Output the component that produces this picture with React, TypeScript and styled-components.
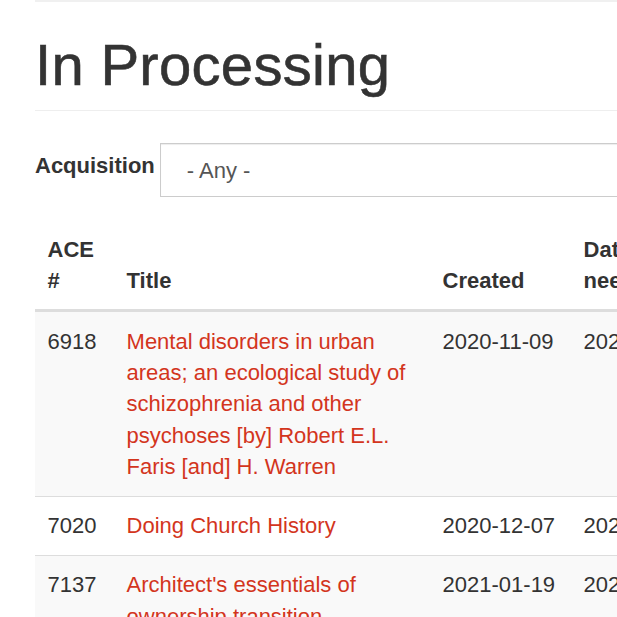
import React from "react";
import styled, { createGlobalStyle } from "styled-components";

const GlobalStyle = createGlobalStyle`
  html, body {
    margin: 0;
    padding: 0;
    background: #fff;
    overflow: hidden;
  }
  body {
    font-family: "Liberation Sans", Arial, Helvetica, sans-serif;
    font-size: 22px;
    line-height: 31.43px;
    color: #333;
  }
`;

const Page = styled.div`
  width: 1100px;
  padding-left: 35px;
  box-sizing: border-box;
`;

const TopRule = styled.div`
  height: 2px;
  background: #f0f0f0;
`;

const PageHeader = styled.h1`
  margin: 31px 0 32px;
  padding-bottom: 14px;
  border-bottom: 1px solid #eee;
  font-size: 58px;
  line-height: 63px;
  letter-spacing: 0.3px;
  font-weight: 500;
  color: #333;
  -webkit-text-stroke: 0.6px #333;
`;

const FilterRow = styled.form`
  display: flex;
  align-items: center;
  gap: 5px;
  margin: 0 0 24px;
`;

const FilterLabel = styled.label`
  font-weight: 700;
  font-size: 22px;
  margin-bottom: 8px;
  color: #333;
`;

const Select = styled.select`
  appearance: none;
  -webkit-appearance: none;
  width: 700px;
  height: 54px;
  padding: 0 26px;
  border: 1px solid #ccc;
  border-radius: 0;
  background: #fff;
  box-shadow: inset 0 1px 1px rgba(0, 0, 0, 0.075);
  font-family: "Liberation Sans", Arial, Helvetica, sans-serif;
  font-size: 22px;
  color: #555;
  outline: none;
`;

const Table = styled.table`
  border-collapse: collapse;
  border-spacing: 0;
  table-layout: fixed;
  width: 837px;
`;

const HeadCell = styled.th`
  text-align: left;
  vertical-align: bottom;
  padding: 12.57px;
  font-weight: 700;
  border-bottom: 3px solid #ddd;
  line-height: 31.43px;
`;

const Row = styled.tr<{ $striped?: boolean }>`
  background: ${(p) => (p.$striped ? "#f9f9f9" : "#fff")};
`;

const Cell = styled.td`
  vertical-align: top;
  padding: 13.5px 12.57px 13px;
  border-top: 1px solid #ddd;
  line-height: 31.43px;
`;

const TitleLink = styled.a`
  color: #d3351d;
  text-decoration: none;
`;

type Item = {
  ace: string;
  title: string;
  created: string;
  needed: string;
  vendor: string;
};

const items: Item[] = [
  {
    ace: "6918",
    title:
      "Mental disorders in urban areas; an ecological study of schizophrenia and other psychoses [by] Robert E.L. Faris [and] H. Warren",
    created: "2020-11-09",
    needed: "2020-12-01",
    vendor: "Amazon",
  },
  {
    ace: "7020",
    title: "Doing Church History",
    created: "2020-12-07",
    needed: "2021-01-15",
    vendor: "Amazon",
  },
  {
    ace: "7137",
    title: "Architect's essentials of ownership transition",
    created: "2021-01-19",
    needed: "2021-02-15",
    vendor: "Amazon",
  },
];

export default function App() {
  return (
    <>
      <GlobalStyle />
      <Page>
        <TopRule />
        <PageHeader>In Processing</PageHeader>
        <FilterRow>
          <FilterLabel htmlFor="acq">Acquisition</FilterLabel>
          <Select id="acq" defaultValue="all">
            <option value="all">- Any -</option>
          </Select>
        </FilterRow>
        <Table>
          <colgroup>
            <col style={{ width: 79 }} />
            <col style={{ width: 316 }} />
            <col style={{ width: 141 }} />
            <col style={{ width: 141 }} />
            <col style={{ width: 160 }} />
          </colgroup>
          <thead>
            <tr>
              <HeadCell>ACE #</HeadCell>
              <HeadCell>Title</HeadCell>
              <HeadCell>Created</HeadCell>
              <HeadCell>Date needed</HeadCell>
              <HeadCell>Vendor</HeadCell>
            </tr>
          </thead>
          <tbody>
            {items.map((it, i) => (
              <Row key={it.ace} $striped={i % 2 === 0}>
                <Cell>{it.ace}</Cell>
                <Cell>
                  <TitleLink href="#">{it.title}</TitleLink>
                </Cell>
                <Cell>{it.created}</Cell>
                <Cell>{it.needed}</Cell>
                <Cell>{it.vendor}</Cell>
              </Row>
            ))}
          </tbody>
        </Table>
      </Page>
    </>
  );
}
